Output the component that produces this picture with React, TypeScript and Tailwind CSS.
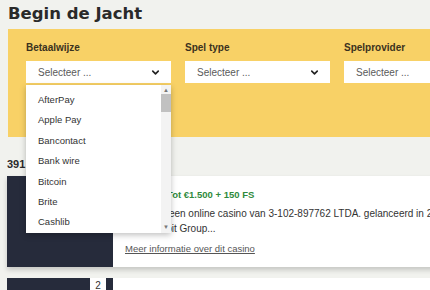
import { ChevronDown } from "lucide-react";

const methods = ["AfterPay", "Apple Pay", "Bancontact", "Bank wire", "Bitcoin", "Brite", "Cashlib", "Crypto", "Creditcard"];

function SelectBox({ open }: { open?: boolean }) {
  return (
    <div className="relative">
      <div className="flex h-[22px] items-center justify-between bg-white pl-3 pr-[10px] text-[10px] text-[#5a5a5a]">
        <span>Selecteer ...</span>
        <ChevronDown size={11} strokeWidth={3.5} className="text-[#222]" />
      </div>
      {open && (
        <div className="absolute left-0 top-[24px] z-10 flex h-[148px] w-full bg-white shadow-[0_2px_6px_rgba(0,0,0,0.25)]">
          <ul className="flex-1 overflow-hidden pt-[5px]">
            {methods.map((m) => (
              <li key={m} className="flex h-[20.4px] items-center pl-3 text-[9.5px] text-[#333]">
                {m}
              </li>
            ))}
          </ul>
          <div className="flex w-[10px] flex-col items-center bg-[#f3f3f3]">
            <span className="mt-[2px] text-[6px] leading-[6px] text-[#777]">▲</span>
            <div className="mt-[1px] h-[18px] w-full bg-[#c1c1c1]" />
            <div className="flex-1" />
            <span className="mb-[3px] text-[6px] leading-[6px] text-[#777]">▼</span>
          </div>
        </div>
      )}
    </div>
  );
}

export default function App() {
  return (
    <div className="h-[290px] w-[430px] overflow-hidden bg-[#f1f2ee] font-['Liberation_Sans',Arial,sans-serif]">
      <h1 className="pl-2 pt-[2px] font-['DejaVu_Sans',sans-serif] text-[16.5px] font-bold leading-[24px] text-[#2a2a2a]">
        Begin de Jacht
      </h1>

      <div className="ml-2 mt-[3px] h-[108px] w-[500px] bg-[#f8d166] pl-[18px] pt-[13px]">
        <div className="flex gap-[14px]">
          {["Betaalwijze", "Spel type", "Spelprovider"].map((label, i) => (
            <div key={label} className="w-[145px] shrink-0">
              <div className="mb-[7px] text-[10px] font-bold leading-[12px] text-[#3b321e]">{label}</div>
              <SelectBox open={i === 0} />
            </div>
          ))}
        </div>
      </div>

      <div className="pl-[7px] pt-[20px] text-[11px] font-bold leading-[14px] text-[#2a2a2a]">391 casino's</div>

      <div className="ml-[7px] mt-[5px] flex h-[91px] w-[480px] shadow-[0_3px_5px_rgba(0,0,0,0.18)]">
        <div className="w-[106px] shrink-0 bg-[#262b3b]" />
        <div className="flex-1 bg-white pl-3 pt-[13px]">
          <div className="text-[9.5px] font-bold leading-[12px] text-[#2f8a3c]">Welkom: Tot €1.500 + 150 FS</div>
          <p className="mt-[5px] text-[10px] leading-[15px] text-[#333]">
            <span className="block whitespace-nowrap">Casino is een online casino van 3-102-897762 LTDA. gelanceerd in 2023</span>
            <span className="block whitespace-nowrap">door Rabbit Group...</span>
          </p>
          <a className="mt-[7px] block text-[9.5px] leading-[12px] text-[#555] underline">
            Meer informatie over dit casino
          </a>
        </div>
      </div>

      <div className="ml-[7px] mt-[11px] flex h-[40px] w-[480px]">
        <div className="relative w-[106px] shrink-0 bg-[#262b3b]">
          <div className="absolute left-[83px] top-0 flex h-[20px] w-[16px] justify-center bg-white text-[10px] leading-[16px] text-[#333]">
            2
          </div>
        </div>
        <div className="flex-1 bg-white" />
      </div>
    </div>
  );
}
